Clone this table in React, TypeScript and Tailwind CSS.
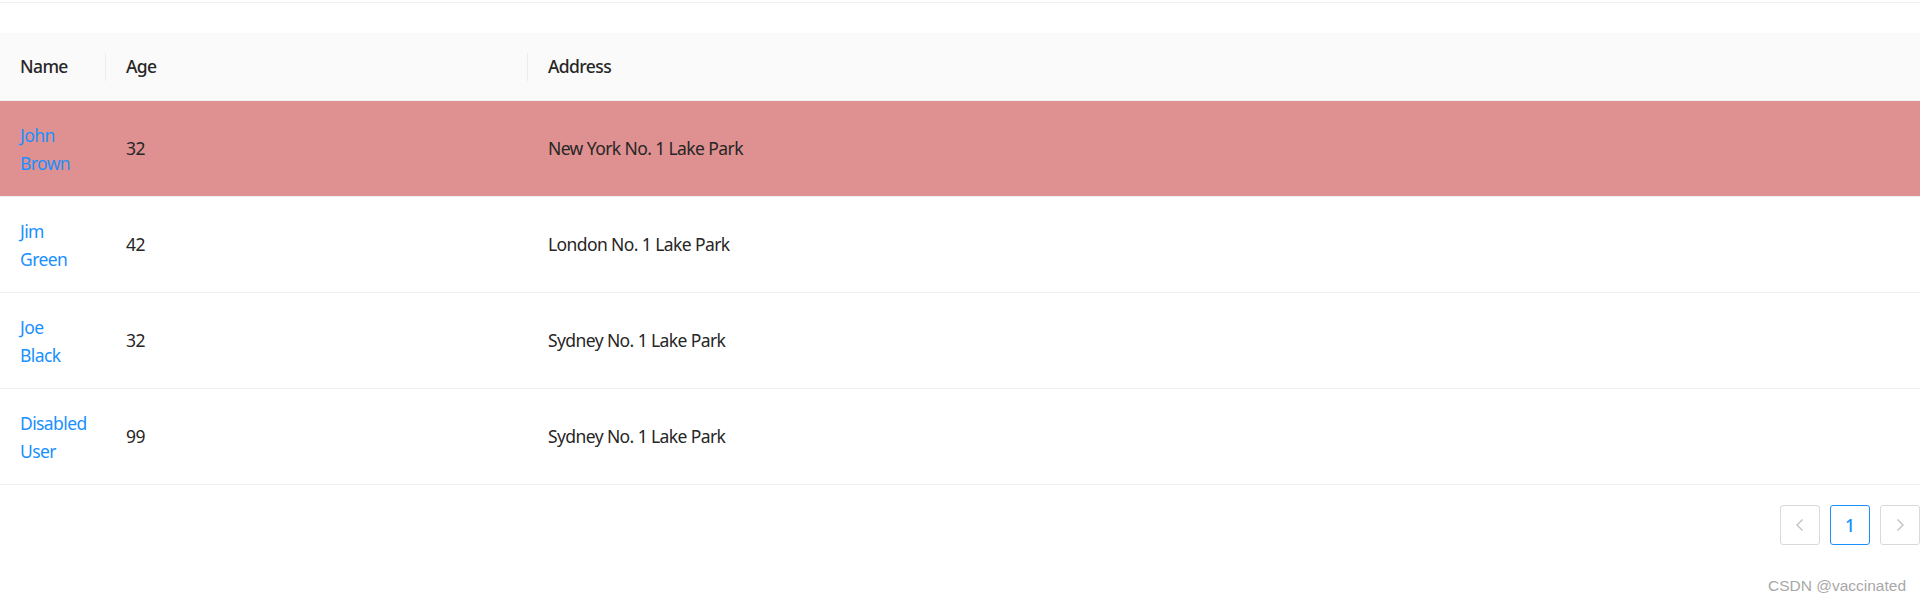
const rows = [
  { name: ["John", "Brown"], age: 32, address: "New York No. 1 Lake Park", selected: true },
  { name: ["Jim", "Green"], age: 42, address: "London No. 1 Lake Park" },
  { name: ["Joe", "Black"], age: 32, address: "Sydney No. 1 Lake Park" },
  { name: ["Disabled", "User"], age: 99, address: "Sydney No. 1 Lake Park" },
];

function Chevron({ dir }: { dir: "left" | "right" }) {
  return (
    <svg width="16" height="16" viewBox="0 0 16 16" fill="none" stroke="#bfbfbf" strokeWidth="1.3">
      {dir === "left" ? <path d="M10.5 2.5 L5 8 L10.5 13.5" /> : <path d="M5.5 2.5 L11 8 L5.5 13.5" />}
    </svg>
  );
}

export default function App() {
  return (
    <div className="w-[1920px] h-[600px] bg-white text-[17.5px] tracking-[-0.6px] text-[#262626] font-['Noto_Sans',sans-serif] overflow-hidden">
      <div className="mt-[2px] h-px bg-[#f0f0f0]" />
      <div className="h-[30px]" />

      <div className="grid grid-cols-[106px_422px_1fr] h-[68px] bg-[#fafafa] border-b border-[#f0f0f0] font-medium">
        <div className="relative flex items-center px-[20px]">
          Name
          <span className="absolute right-0 top-1/2 -translate-y-1/2 h-[28px] w-px bg-[#ececec]" />
        </div>
        <div className="relative flex items-center px-[20px]">
          Age
          <span className="absolute right-0 top-1/2 -translate-y-1/2 h-[28px] w-px bg-[#ececec]" />
        </div>
        <div className="flex items-center px-[20px]">Address</div>
      </div>

      {rows.map((r, i) => (
        <div
          key={i}
          className={
            "grid grid-cols-[106px_422px_1fr] h-[96px] border-b border-[#f0f0f0] " +
            (r.selected ? "bg-[#df9090]" : "bg-white")
          }
        >
          <div className="flex flex-col justify-center px-[20px] text-[#1890ff] leading-[28px]">
            <span>{r.name[0]}</span>
            <span>{r.name[1]}</span>
          </div>
          <div className="flex items-center px-[20px]">{r.age}</div>
          <div className="flex items-center px-[20px]">{r.address}</div>
        </div>
      ))}

      <div className="mt-[20px] flex justify-end gap-[10px] tracking-normal">
        <button className="w-[40px] h-[40px] flex items-center justify-center border border-[#d9d9d9] rounded-[3px] bg-white">
          <Chevron dir="left" />
        </button>
        <button className="w-[40px] h-[40px] flex items-center justify-center border border-[#1890ff] rounded-[3px] bg-white text-[#1890ff] font-medium">
          1
        </button>
        <button className="w-[40px] h-[40px] flex items-center justify-center border border-[#d9d9d9] rounded-[3px] bg-white">
          <Chevron dir="right" />
        </button>
      </div>

      <div className="mt-[29px] flex justify-end pr-[14px] text-[15.5px] tracking-normal text-[#a8a8a8] font-['Liberation_Sans',sans-serif]">
        CSDN @vaccinated
      </div>
    </div>
  );
}
